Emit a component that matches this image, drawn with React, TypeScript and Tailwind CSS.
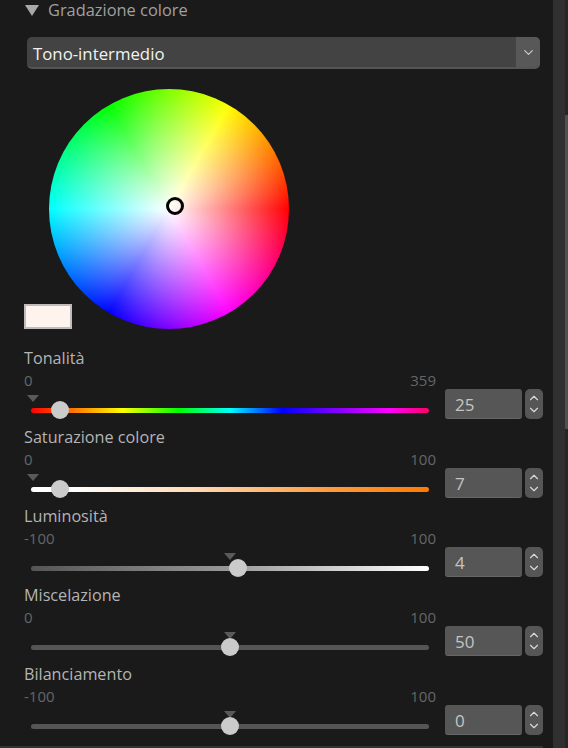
import { ChevronDown, ChevronUp } from 'lucide-react'

interface SliderProps {
  label: string
  min: number
  max: number
  value: number
  // thumb centre and default-marker centre, in px from the left of the slider box
  thumb: number
  marker: number
  track: string
}

const sliders: SliderProps[] = [
  { label: 'Tonalità', min: 0, max: 359, value: 25, thumb: 36, marker: 9, track: 'bg-[linear-gradient(to_right,#f00,#ff0_23%,#0f0_37%,#0ff_50%,#00f_63%,#f0f_90%,#f06)]' },
  { label: 'Saturazione colore', min: 0, max: 100, value: 7, thumb: 36, marker: 9, track: 'bg-[linear-gradient(to_right,#fff,#fff_10%,#ffdcb8_40%,#ff9a3c_75%,#ff7a00)]' },
  { label: 'Luminosità', min: -100, max: 100, value: 4, thumb: 214, marker: 206, track: 'bg-[linear-gradient(to_right,#555,#999_50%,#fff)]' },
  { label: 'Miscelazione', min: 0, max: 100, value: 50, thumb: 206, marker: 206, track: 'bg-[#555]' },
  { label: 'Bilanciamento', min: -100, max: 100, value: 0, thumb: 206, marker: 206, track: 'bg-[#555]' },
]

function Slider({ label, min, max, value, thumb, marker, track }: SliderProps) {
  return (
    <div className="h-[79px] shrink-0">
      <div className="h-[20px] text-[16.2px] leading-[20px] text-[#b4b4b4]">{label}</div>
      <div className="flex">
        <div className="w-[412px] shrink-0">
          <div className="mt-[2px] flex h-[21px] justify-between text-[15px] leading-[20px] text-[#666]">
            <span>{min}</span>
            <span>{max}</span>
          </div>
          <div className="relative h-[36px]">
            <div className="absolute top-[4px] h-0 w-0 -translate-x-1/2 border-x-[6px] border-t-[7px] border-x-transparent border-t-[#5a5a5a]" style={{ left: marker }} />
            <div className={`absolute left-[7px] right-[7px] top-[17px] h-[5px] rounded-full ${track}`} />
            <div className="absolute top-[10px] h-[18px] w-[18px] -translate-x-1/2 rounded-full bg-[#cbcbcb]" style={{ left: thumb }} />
          </div>
        </div>
        <div className="ml-[9px] mt-[21px] flex h-[30px] items-start">
          <div className="flex h-[30px] w-[77px] items-center rounded-[3px] border-b border-[#666] bg-[#565656] pl-[10px] pt-[2px] text-[17px] text-[#c4c4c4]">{value}</div>
          <div className="ml-[3px] flex h-[30px] w-[18px] flex-col items-center justify-center rounded-[5px] bg-[#565656] text-[#d8d8d8]">
            <ChevronUp size={14} strokeWidth={2} className="-mb-[1px]" />
            <ChevronDown size={14} strokeWidth={2} className="-mt-[1px]" />
          </div>
        </div>
      </div>
    </div>
  )
}

export default function App() {
  return (
    <div className="flex h-[748px] w-[568px] overflow-hidden bg-[#1a1a1a] font-['Open_Sans','Noto_Sans',sans-serif]">
      <div className="w-[553px] shrink-0">
        <div className="h-[746px] pl-[24px]">
          {/* Section header */}
          <div className="flex h-[20px] items-center">
            <div className="ml-[1px] h-0 w-0 border-x-[7px] border-t-[11px] border-x-transparent border-t-[#a8a8a8]" />
            <span className="ml-[9px] text-[16.4px] leading-[20px] text-[#a0a0a0]">Gradazione colore</span>
          </div>

          {/* Mode select */}
          <div className="ml-[3px] mt-[17px] flex h-[32px] w-[513px] overflow-hidden rounded-[5px] border-b-2 border-[#555] bg-[#434343]">
            <div className="flex-1 pl-[6px] text-[16.8px] leading-[33px] text-[#f2f2f2]">Tono-intermedio</div>
            <div className="flex w-[24px] items-center justify-center bg-[#585858] text-[#c8c8c8]">
              <ChevronDown size={15} strokeWidth={2} />
            </div>
          </div>

          {/* Colour wheel */}
          <div className="relative ml-[25px] mt-[20px] h-[240px] w-[240px] rounded-full bg-[radial-gradient(closest-side,#fff,transparent),conic-gradient(from_90deg,#f00,#f0f,#00f,#0ff,#0f0,#ff0,#f00)]">
            <div className="absolute left-[117px] top-[108px] h-[18px] w-[18px] rounded-full border-[3px] border-black" />
          </div>

          <div className="mt-[-25px] h-[25px] w-[48px] border-2 border-[#bdbdbd] bg-[#fff3ee]" />

          {/* Sliders */}
          <div className="mt-[19px] flex flex-col">
            {sliders.map((s) => (
              <Slider key={s.label} {...s} />
            ))}
          </div>
        </div>
        <div className="mr-[10px] h-[2px] bg-[#333]" />
      </div>

      {/* Scrollbar */}
      <div className="flex w-[15px] shrink-0 bg-[#303030]">
        <div className="ml-[12px] w-[3px] bg-[#262626]">
          <div className="mt-[115px] h-[314px] bg-[#505050]" />
        </div>
      </div>
    </div>
  )
}
